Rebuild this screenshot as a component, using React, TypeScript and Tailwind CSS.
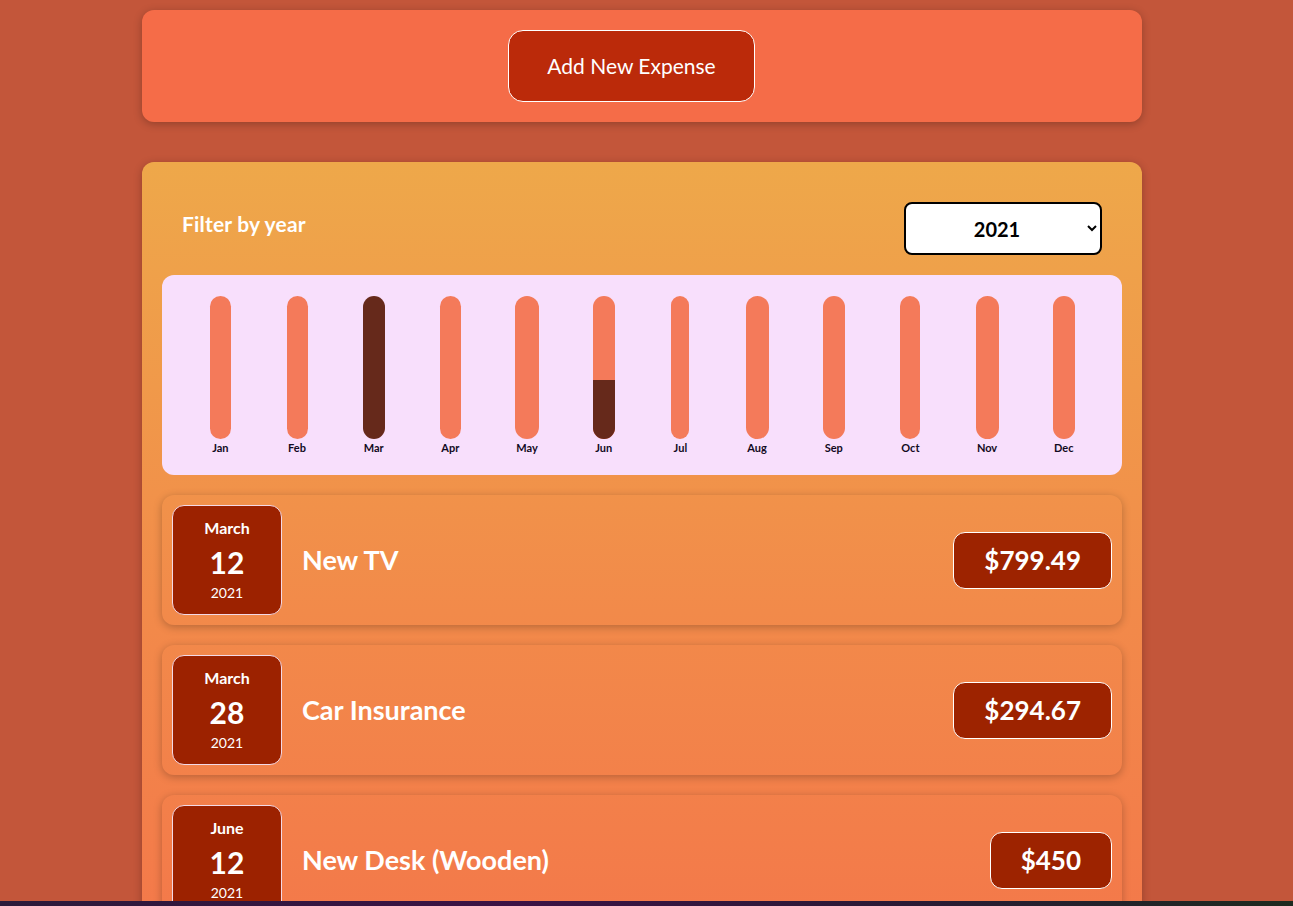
const months = [
  { label: "Jan", w: "w-[21px]" },
  { label: "Feb", w: "w-[21px]" },
  { label: "Mar", w: "w-[22px]" },
  { label: "Apr", w: "w-[21px]" },
  { label: "May", w: "w-[24px]" },
  { label: "Jun", w: "w-[22px]" },
  { label: "Jul", w: "w-[18px]" },
  { label: "Aug", w: "w-[23px]" },
  { label: "Sep", w: "w-[22px]" },
  { label: "Oct", w: "w-[20px]" },
  { label: "Nov", w: "w-[23px]" },
  { label: "Dec", w: "w-[22px]" },
];

interface Expense {
  id: string;
  title: string;
  amount: number;
  date: Date;
}

const expenses: Expense[] = [
  { id: "e1", title: "New TV", amount: 799.49, date: new Date(2021, 2, 12) },
  { id: "e2", title: "Car Insurance", amount: 294.67, date: new Date(2021, 2, 28) },
  { id: "e3", title: "New Desk (Wooden)", amount: 450, date: new Date(2021, 5, 12) },
];

function ExpenseDate({ date }: { date: Date }) {
  const month = date.toLocaleString("en-US", { month: "long" });
  const day = date.toLocaleString("en-US", { day: "2-digit" });
  const year = date.getFullYear();
  return (
    <div className="w-[110px] h-[110px] shrink-0 flex flex-col items-center justify-center rounded-xl border border-[#f3d9e6] bg-[#9c2200] text-white">
      <div className="text-[16px] font-bold leading-6">{month}</div>
      <div className="mt-1 text-[30px] font-bold leading-9">{day}</div>
      <div className="mt-[2px] text-[14px] leading-[22px]">{year}</div>
    </div>
  );
}

function ExpenseItem({ expense }: { expense: Expense }) {
  return (
    <div className="flex items-center justify-between p-[10px] rounded-xl shadow-[0_2px_8px_rgba(0,0,0,0.25)]">
      <div className="flex items-center gap-5">
        <ExpenseDate date={expense.date} />
        <h2 className="text-[27px] font-bold text-white">{expense.title}</h2>
      </div>
      <div className="px-[30px] h-[57px] flex items-center rounded-xl border border-white bg-[#9d2300] text-white text-[26px] font-bold">
        ${expense.amount}
      </div>
    </div>
  );
}

function Chart() {
  const totals = new Array(12).fill(0);
  expenses.forEach((e) => (totals[e.date.getMonth()] += e.amount));
  const max = Math.max(...totals);
  return (
    <div className="flex h-[200px] px-5 pt-[21px] rounded-xl bg-[#f8dffc]">
      {months.map((m, i) => (
        <div key={m.label} className="flex-1 flex flex-col items-center">
          <div className={`${m.w} h-[143px] rounded-full bg-[#f47a5a] overflow-hidden flex flex-col justify-end`}>
            <div
              className="bg-[#66291b] w-full"
              style={{ height: `${max > 0 ? Math.round((totals[i] / max) * 100) : 0}%` }}
            />
          </div>
          <div className="mt-[1px] text-[11px] font-bold text-[#120a22]">{m.label}</div>
        </div>
      ))}
    </div>
  );
}

export default function App() {
  return (
    <div className="h-[906px] flex flex-col bg-[#c3563a] font-['Lato',sans-serif]">
      <div className="h-[901px] overflow-hidden pr-[9px]">
        <div className="w-[1000px] mx-auto pt-[10px] flex flex-col gap-10">
          {/* New expense */}
          <div className="h-[112px] flex items-center justify-center rounded-xl bg-[#f56c48] shadow-[0_2px_8px_rgba(0,0,0,0.25)]">
            <button className="w-[247px] h-[72px] mr-[21px] rounded-[15px] border border-white bg-[#bb2a0a] text-white text-[21px]">
              Add New Expense
            </button>
          </div>

          {/* Expenses */}
          <div className="rounded-xl px-5 pt-10 pb-5 bg-[linear-gradient(180deg,#eea84a_0%,#f28a4a_50%,#f4714a_100%)] min-h-[900px] flex flex-col gap-5 shadow-[0_2px_8px_rgba(0,0,0,0.25)]">
            <div className="flex items-start justify-between px-5">
              <label className="mt-[6px] text-[21px] font-bold text-white tracking-[0.2px]">Filter by year</label>
              <select
                defaultValue="2021"
                className="w-[198px] h-[53px] rounded-lg border-2 border-black bg-white text-[20px] font-bold text-center px-3"
              >
                <option>2022</option>
                <option>2021</option>
                <option>2020</option>
                <option>2019</option>
              </select>
            </div>
            <Chart />
            {expenses.map((e) => (
              <ExpenseItem key={e.id} expense={e} />
            ))}
          </div>
        </div>
      </div>
      <div className="h-[5px] bg-[linear-gradient(90deg,#2b1a3a,#3c1245_40%,#2a1a35_70%,#1d2a1f)]" />
    </div>
  );
}
